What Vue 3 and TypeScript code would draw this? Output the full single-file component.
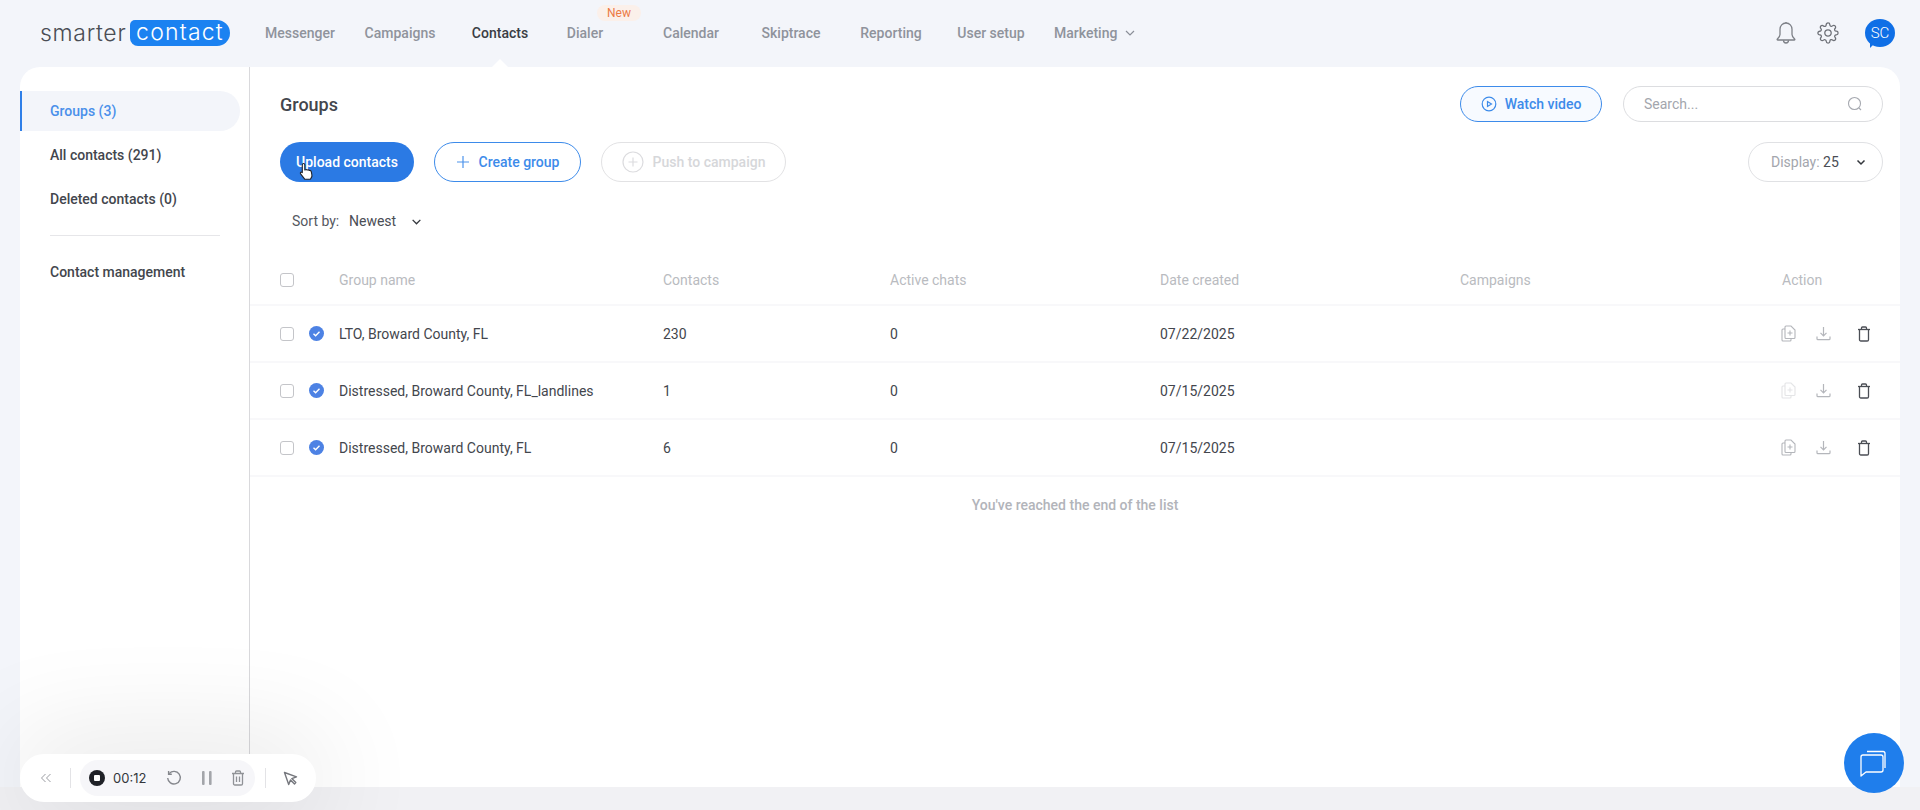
<script setup lang="ts">
interface Row { name: string; contacts: string; date: string; faded: boolean }
const navItems: { label: string; cls: string }[] = [
  { label: 'Messenger', cls: '' },
  { label: 'Campaigns', cls: '' },
  { label: 'Contacts', cls: 'active' },
  { label: 'Dialer', cls: 'dialer' },
  { label: 'Calendar', cls: '' },
  { label: 'Skiptrace', cls: '' },
  { label: 'Reporting', cls: '' },
  { label: 'User setup', cls: '' },
]
const rows: Row[] = [
  { name: 'LTO, Broward County, FL', contacts: '230', date: '07/22/2025', faded: false },
  { name: 'Distressed, Broward County, FL_landlines', contacts: '1', date: '07/15/2025', faded: true },
  { name: 'Distressed, Broward County, FL', contacts: '6', date: '07/15/2025', faded: false },
]
</script>

<template>
  <div class="page">
    <header class="top">
      <div class="logo">
        <span class="logo-a">smarter</span>
        <span class="logo-b">contact</span>
      </div>
      <nav class="nav">
        <a v-for="n in navItems" :key="n.label" class="nav-item" :class="n.cls">
          {{ n.label }}
          <span v-if="n.cls === 'dialer'" class="new">New</span>
        </a>
        <a class="nav-item marketing">
          Marketing
          <svg width="12" height="12" viewBox="0 0 12 12" fill="none" stroke="#8b8f98" stroke-width="1.2"><path d="M2 4l4 4 4-4" /></svg>
        </a>
      </nav>
      <div class="top-right">
        <svg class="bell" width="22" height="24" viewBox="0 0 22 24" fill="none" stroke="#7d8087" stroke-width="1.3" stroke-linejoin="round"><path d="M11 2c-3.6 0-6 2.8-6 6.3v5.2c0 1.6-1.1 3-2.6 4.4-.5.5-.2 1.1.4 1.1h16.4c.6 0 .9-.6.4-1.1-1.5-1.4-2.6-2.8-2.6-4.4V8.300C17 4.800 14.600 2 11 2z" /><path d="M8.500 19.200c0 1.700 1.100 2.800 2.500 2.800s2.500-1.100 2.500-2.800" /><path d="M11 1v1" /></svg>
        <svg class="gear" width="22" height="24" viewBox="0 0 24 24" fill="none" stroke="#6e7178" stroke-width="1.4"><path d="M12 15.500a3.500 3.500 0 1 0 0-7 3.500 3.500 0 0 0 0 7z" /><path d="M19.400 15a1.650 1.650 0 0 0 .33 1.820l.06.06a2 2 0 0 1 0 2.830 2 2 0 0 1-2.830 0l-.06-.06a1.650 1.650 0 0 0-1.820-.33 1.650 1.650 0 0 0-1 1.510V21a2 2 0 0 1-2 2 2 2 0 0 1-2-2v-.09A1.650 1.650 0 0 0 9 19.400a1.650 1.650 0 0 0-1.820.33l-.06.06a2 2 0 0 1-2.830 0 2 2 0 0 1 0-2.830l.06-.06a1.650 1.650 0 0 0 .33-1.820 1.650 1.650 0 0 0-1.510-1H3a2 2 0 0 1-2-2 2 2 0 0 1 2-2h.09A1.650 1.650 0 0 0 4.600 9a1.650 1.650 0 0 0-.33-1.820l-.06-.06a2 2 0 0 1 0-2.830 2 2 0 0 1 2.830 0l.06.06a1.650 1.650 0 0 0 1.820.33H9a1.650 1.650 0 0 0 1-1.510V3a2 2 0 0 1 2-2 2 2 0 0 1 2 2v.09a1.650 1.650 0 0 0 1 1.510 1.650 1.650 0 0 0 1.820-.33l.06-.06a2 2 0 0 1 2.830 0 2 2 0 0 1 0 2.830l-.06.06a1.650 1.650 0 0 0-.33 1.820V9a1.650 1.650 0 0 0 1.510 1H21a2 2 0 0 1 2 2 2 2 0 0 1-2 2h-.09a1.650 1.650 0 0 0-1.510 1z" /></svg>
        <div class="avatar">SC</div>
      </div>
    </header>

    <div class="card">
      <aside class="side">
        <div class="side-item current">Groups (3)</div>
        <div class="side-item">All contacts (291)</div>
        <div class="side-item">Deleted contacts (0)</div>
        <div class="side-line"></div>
        <div class="side-item">Contact management</div>
      </aside>

      <main class="main">
        <div class="title-row">
          <h1 class="title">Groups</h1>
          <div class="title-right">
            <button class="btn watch">
              <svg width="16" height="16" viewBox="0 0 16 16" fill="none" stroke="#3d8bea" stroke-width="1.200"><circle cx="8" cy="8" r="6.800" /><path d="M6.500 5.500v5l4-2.500z" /></svg>
              Watch video
            </button>
            <div class="search">
              <span>Search...</span>
              <svg width="16" height="16" viewBox="0 0 16 16" fill="none" stroke="#a6a9b0" stroke-width="1.100"><circle cx="7.500" cy="7.500" r="6" /><path d="M12 12l2 2" /></svg>
            </div>
          </div>
        </div>

        <div class="btn-row">
          <button class="btn primary">Upload contacts</button>
          <button class="btn outline">
            <svg width="14" height="14" viewBox="0 0 14 14" stroke="#4d93ec" stroke-width="1.200"><path d="M7 1v12M1 7h12" /></svg>
            Create group
          </button>
          <button class="btn disabled">
            <svg width="22" height="22" viewBox="0 0 22 22" fill="none" stroke="#dcdcdf" stroke-width="1.200"><circle cx="11" cy="11" r="10" /><path d="M11 6.500v9M6.500 11h9" /></svg>
            Push to campaign
          </button>
          <div class="display">
            <span class="display-label">Display:</span>&nbsp;<span class="display-val">25</span>
            <svg width="10" height="10" viewBox="0 0 10 10" fill="none" stroke="#33363c" stroke-width="1.500"><path d="M1.500 3.500L5 7l3.500-3.500" /></svg>
          </div>
        </div>

        <div class="sort">
          <span class="sort-label">Sort by:</span>
          <span class="sort-val">Newest</span>
          <svg width="11" height="11" viewBox="0 0 10 10" fill="none" stroke="#33363c" stroke-width="1.200"><path d="M1.500 3.500L5 7l3.500-3.500" /></svg>
        </div>

        <div class="grid head">
          <div><span class="cb"></span></div>
          <div>Group name</div>
          <div>Contacts</div>
          <div>Active chats</div>
          <div>Date created</div>
          <div>Campaigns</div>
          <div>Action</div>
        </div>

        <div v-for="r in rows" :key="r.name" class="grid row">
          <div class="sel">
            <span class="cb"></span>
            <svg class="ok" width="15" height="15" viewBox="0 0 15 15"><circle cx="7.500" cy="7.500" r="7.500" fill="#4d82e4" /><path d="M4.500 7.700l2.100 2 3.900-3.900" fill="none" stroke="#fff" stroke-width="1.400" /></svg>
          </div>
          <div>{{ r.name }}</div>
          <div>{{ r.contacts }}</div>
          <div>0</div>
          <div>{{ r.date }}</div>
          <div></div>
          <div class="acts">
            <svg class="a-copy" :class="{ faded: r.faded }" width="15" height="17" viewBox="0 0 15 17" fill="none" stroke="#b4b6bb" stroke-width="1.100"><path d="M5 1h5l4 4v7.500a1 1 0 0 1-1 1H5a1 1 0 0 1-1-1V2a1 1 0 0 1 1-1z" /><path d="M4 4H2a1 1 0 0 0-1 1v10a1 1 0 0 0 1 1h7a1 1 0 0 0 1-1v-1.500" /><path d="M9 5.500v5M6.500 8h5" /></svg>
            <svg class="a-down" width="15" height="15" viewBox="0 0 15 15" fill="none" stroke="#b4b6bb" stroke-width="1.200"><path d="M7.500 1v8.500M4.500 6.800l3 3 3-3" /><path d="M1 10.500v2.200a1 1 0 0 0 1 1h11a1 1 0 0 0 1-1v-2.200" /></svg>
            <svg class="a-trash" width="14" height="16" viewBox="0 0 14 16" fill="none" stroke="#4b4e55" stroke-width="1.300"><path d="M1 3.500h12" /><path d="M4.500 3.500V2a1 1 0 0 1 1-1h3a1 1 0 0 1 1 1v1.500" /><path d="M2.500 3.500v10.200a1.300 1.300 0 0 0 1.300 1.300h6.400a1.300 1.300 0 0 0 1.300-1.300V3.500" /></svg>
          </div>
        </div>

        <p class="end">You've reached the end of the list</p>
      </main>
    </div>
    <div class="strip"></div>

    <div class="recorder">
      <svg width="12" height="10" viewBox="0 0 12 10" fill="none" stroke="#9a9ca2" stroke-width="1"><path d="M5.500 1L1.500 5l4 4M10.500 1l-4 4 4 4" /></svg>
      <span class="rec-line first"></span>
      <div class="rec-pill">
        <span class="stop"><i></i></span>
        <span class="time">00:12</span>
        <svg class="r-redo" width="16" height="16" viewBox="0 0 16 16" fill="none" stroke="#85878d" stroke-width="1.400"><path d="M3.200 3.600A6.300 6.300 0 1 1 1.700 8" /><path d="M2.600 1v3.200h3.200" /></svg>
        <svg class="r-pause" width="10" height="14" viewBox="0 0 10 14" fill="#a3a5aa"><rect x="0" y="0" width="2.600" height="14" rx="1" /><rect x="7" y="0" width="2.600" height="14" rx="1" /></svg>
        <svg class="r-trash" width="14" height="16" viewBox="0 0 14 16" fill="none" stroke="#909297" stroke-width="1.300"><path d="M1 3.500h12M4.500 3.500V2a1 1 0 0 1 1-1h3a1 1 0 0 1 1 1v1.500M2.500 3.500v10.200a1.300 1.300 0 0 0 1.300 1.300h6.400a1.300 1.300 0 0 0 1.300-1.300V3.500M5.500 6.500v5.500M8.500 6.500v5.500" /></svg>
      </div>
      <span class="rec-line"></span>
      <svg class="r-arrow" width="15" height="15" viewBox="0 0 15 15" fill="none" stroke="#75777d" stroke-width="1.400" stroke-linejoin="round"><path d="M1.500 1.500l12 4.300-4.700 1.800 4 4-1.300 1.300-4-4-1.800 4.700z" /></svg>
    </div>

    <div class="chat">
      <svg width="30" height="30" viewBox="0 0 30 30" fill="none" stroke="#fff" stroke-width="1.300" stroke-linejoin="round"><path d="M2 9a2 2 0 0 1 2-2h18a2 2 0 0 1 2 2v13a2 2 0 0 1-2 2H7l-5 4z" /><path d="M8 3.500h16a2 2 0 0 1 2 2V20" /></svg>
    </div>

    <svg class="hand" width="15" height="19" viewBox="0 0 15 19"><path d="M4.500 1.500c.8 0 1.300.6 1.300 1.400V8l.9-.3c.5-.2 1.100-.1 1.400.3l.5-.1c.6-.2 1.200 0 1.500.5h.5c.8-.1 1.500.5 1.700 1.300l.6 3.300c.2 1-.1 2-.7 2.800l-.8 1.400H5.700L2 12.300c-.6-.7-1-1.300-.5-1.900.5-.5 1.200-.3 1.800.2V2.900c0-.8.400-1.400 1.200-1.400z" fill="#fff" stroke="#20232a" stroke-width="1.100" stroke-linejoin="round" /></svg>
  </div>
</template>

<style>
html, body { margin: 0; background: #f3f5fa; }
</style>

<style scoped>
.page {
  position: relative;
  width: 1920px;
  height: 810px;
  overflow: hidden;
  background: #f3f5fa;
  font-family: Roboto, "Liberation Sans", sans-serif;
  font-size: 14px;
  color: #3a3d44;
  display: flex;
  flex-direction: column;
}
.top {
  height: 66px;
  margin-bottom: 1px;
  flex: none;
  display: flex;
  align-items: center;
  padding-left: 40px;
}
.logo { width: 210px; display: flex; align-items: center; flex: none; }
.logo-a {
  font-family: Inter, sans-serif;
  font-weight: 300;
  font-size: 23px;
  letter-spacing: 0.7px;
  color: #4a4d55;
  width: 90px;
}
.logo-b {
  width: 100px;
  height: 26px;
  border-radius: 5px 13px 13px 8px;
  background: #1b82f1;
  color: #fff;
  font-family: Inter, sans-serif;
  font-weight: 300;
  font-size: 23px;
  letter-spacing: 1.2px;
  line-height: 25px;
  text-align: center;
}
.nav { display: flex; align-items: center; }
.nav-item {
  width: 100px;
  flex: none;
  text-align: center;
  color: #8f939c;
  font-weight: 500;
  font-size: 14px;
  position: relative;
}
.nav-item.active { color: #3a3d44; }
.nav-item.active::after {
  content: "";
  position: absolute;
  left: 50%;
  margin-left: -9px;
  top: 34px;
  border-left: 9px solid transparent;
  border-right: 9px solid transparent;
  border-bottom: 9px solid #fff;
}
.nav-item.dialer { width: 91px; padding-right: 21px; box-sizing: border-box; }
.new {
  position: absolute;
  left: 47px;
  top: -20px;
  width: 44px;
  height: 16px;
  line-height: 16px;
  border-radius: 8px;
  background: #fbf0ea;
  color: #ec7a45;
  font-size: 12px;
  font-weight: 400;
}
.nav-item.marketing {
  width: auto;
  margin-left: 13px;
  display: flex;
  align-items: center;
  gap: 7px;
}
.top-right {
  margin-left: auto;
  display: flex;
  align-items: center;
  padding-right: 25px;
}
.bell { margin-right: 20px; }
.gear { margin-right: 26px; }
.avatar {
  width: 30px;
  height: 28px;
  border-radius: 50%;
  background: #0f6fe6;
  color: #fff;
  font-size: 15px;
  font-weight: 300;
  line-height: 28px;
  text-align: center;
  position: relative;
}
.avatar::after {
  content: "";
  position: absolute;
  left: 5px;
  top: 22px;
  width: 0;
  height: 0;
  border-left: 7px solid #0f6fe6;
  border-bottom: 7px solid transparent;
}
.card {
  height: 720px;
  flex: none;
  margin: 0 20px;
  background: #fff;
  border-radius: 20px 20px 0 0;
  display: flex;
}
.strip { flex: 1; background: #f1f1f4; }
.side {
  width: 229px;
  flex: none;
  border-right: 1px solid #d9d9dc;
  padding-top: 24px;
  box-sizing: content-box;
}
.side-item {
  height: 40px;
  margin-bottom: 4px;
  line-height: 40px;
  padding-left: 30px;
  font-weight: 500;
  color: #43464d;
}
.side-item.current {
  width: 220px;
  box-sizing: border-box;
  padding-left: 28px;
  border-left: 2px solid #2f7fe8;
  border-radius: 0 20px 20px 0;
  background: #f3f5fa;
  color: #4a90ea;
}
.side-line { height: 1px; background: #e6e6e9; margin: 16px 29px 16px 30px; }
.main { flex: 1; min-width: 0; }
.title-row {
  display: flex;
  justify-content: space-between;
  align-items: center;
  padding: 19px 17px 0 30px;
}
.title { margin: 0; font-size: 18px; font-weight: 500; color: #43464d; }
.title-right { display: flex; gap: 21px; }
.btn {
  font-family: inherit;
  font-size: 14px;
  font-weight: 500;
  box-sizing: border-box;
  border-radius: 20px;
  border: 1px solid transparent;
  background: #fff;
  display: flex;
  align-items: center;
  justify-content: center;
  padding: 0;
}
.watch {
  width: 142px;
  height: 36px;
  gap: 8px;
  border-color: #3d8bea;
  background: #f7faff;
  color: #3d8bea;
}
.search {
  width: 260px;
  height: 36px;
  box-sizing: border-box;
  border: 1px solid #dcdde0;
  border-radius: 18px;
  padding: 0 19px 0 20px;
  display: flex;
  align-items: center;
  justify-content: space-between;
  color: #a3a6ad;
}
.btn-row {
  display: flex;
  align-items: center;
  margin-top: 20px;
  padding: 0 17px 0 30px;
  gap: 20px;
}
.btn-row .btn { height: 40px; }
.primary { width: 134px; background: #2b7ae4; color: #fff; }
.outline { width: 147px; gap: 9px; border-color: #3d8bea; color: #3d8bea; }
.disabled { width: 185px; gap: 9px; border-color: #e2e2e4; color: #d6d7da; }
.display {
  margin-left: auto;
  width: 135px;
  height: 40px;
  box-sizing: border-box;
  border: 1px solid #e0e1e4;
  border-radius: 20px;
  padding-left: 22px;
  display: flex;
  align-items: center;
  white-space: pre;
}
.display-label { color: #a3a6ad; }
.display-val { color: #4a4d55; }
.display svg { margin-left: 17px; }
.sort {
  margin-top: 27px;
  height: 24px;
  padding-left: 42px;
  display: flex;
  align-items: center;
}
.sort-label { width: 57px; color: #55585f; }
.sort-val { width: 62px; color: #4a4d55; }
.grid {
  display: grid;
  grid-template-columns: 59px 324px 227px 270px 300px 322px 1fr;
  align-items: center;
  padding-left: 30px;
}
.head {
  height: 48px;
  margin-top: 23px;
  border-bottom: 2px solid #f8f8fa;
  color: #b9bbc0;
}
.row {
  height: 57px;
  box-sizing: border-box;
  border-bottom: 2px solid #f8f8fa;
  color: #43464d;
}
.cb {
  display: block;
  width: 14px;
  height: 14px;
  box-sizing: border-box;
  border: 1px solid #c4c5c9;
  border-radius: 3px;
}
.sel { display: flex; align-items: center; gap: 15px; }
.ok { display: block; }
.acts { display: flex; align-items: center; margin-left: -1px; }
.a-down { margin-left: 20px; }
.a-trash { margin-left: 26px; }
.faded { opacity: 0.35; }
.end {
  margin: 18px 0 0;
  line-height: 20px;
  text-align: center;
  color: #b2b4ba;
  font-weight: 500;
}
.recorder {
  position: absolute;
  left: 20px;
  top: 754px;
  width: 296px;
  height: 48px;
  box-sizing: border-box;
  border-radius: 24px;
  background: #fff;
  box-shadow: 0 0 110px 10px rgba(0, 0, 0, 0.12);
  display: flex;
  align-items: center;
  padding-left: 20px;
}
.rec-line { width: 1px; height: 20px; background: #e3e3e6; margin-left: 10px; }
.rec-line.first { margin-left: 18px; }
.rec-pill {
  margin-left: 9px;
  width: 175px;
  height: 36px;
  border-radius: 18px;
  background: #f6f6f9;
  display: flex;
  align-items: center;
  padding-left: 9px;
  box-sizing: border-box;
}
.stop {
  width: 16px;
  height: 16px;
  border-radius: 50%;
  background: #1f2127;
  display: flex;
  align-items: center;
  justify-content: center;
}
.stop i { width: 6px; height: 6px; background: #fff; border-radius: 1px; display: block; }
.time {
  margin-left: 8px;
  width: 34px;
  font-family: Inter, sans-serif;
  font-size: 13px;
  color: #33363c;
}
.r-redo { margin-left: 19px; }
.r-pause { margin-left: 20px; }
.r-trash { margin-left: 19px; }
.r-arrow { margin-left: 17px; }
.chat {
  position: absolute;
  left: 1844px;
  top: 733px;
  width: 60px;
  height: 60px;
  border-radius: 50%;
  background: #1f7eec;
  display: flex;
  align-items: center;
  justify-content: center;
}
.hand { position: absolute; left: 299px; top: 162px; }
</style>
